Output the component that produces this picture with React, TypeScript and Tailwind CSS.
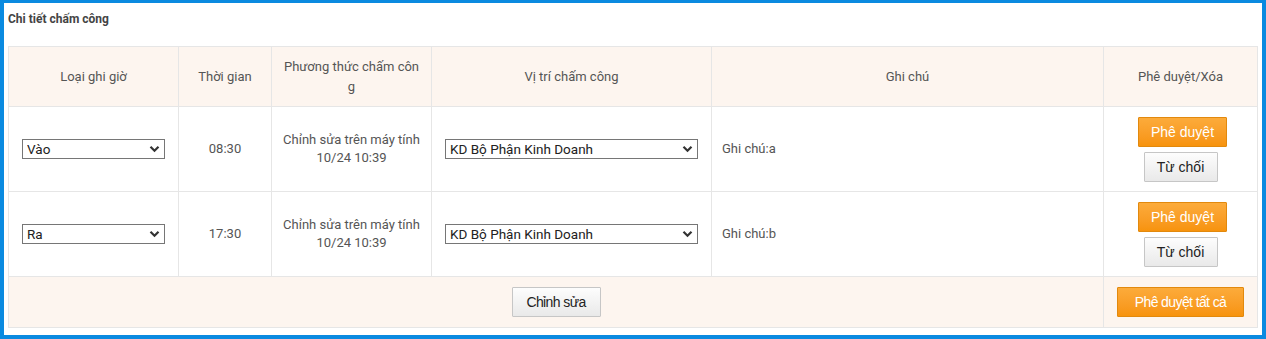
import React from "react";

type Row = {
  kind: string;
  time: string;
  note: string;
};

const rows: Row[] = [
  { kind: "Vào", time: "08:30", note: "Ghi chú:a" },
  { kind: "Ra", time: "17:30", note: "Ghi chú:b" },
];

function Chevron() {
  return (
    <svg
      width="11"
      height="8"
      viewBox="0 0 11 8"
      className="pointer-events-none absolute right-[5px] top-1/2 -translate-y-1/2"
    >
      <path d="M1.5 1.8 L5.5 5.8 L9.5 1.8" fill="none" stroke="#333" strokeWidth="2.2" />
    </svg>
  );
}

function FakeSelect({ value, width }: { value: string; width: string }) {
  return (
    <div className={`relative h-[20px] ${width}`}>
      <select
        defaultValue={value}
        className="h-full w-full appearance-none rounded-none border border-[#767676] bg-white pl-[4px] text-[13.5px] leading-[18px] text-[#222] outline-none"
      >
        <option>{value}</option>
      </select>
      <Chevron />
    </div>
  );
}

const orangeBtn =
  "rounded-[1px] border border-[#e2890d] bg-gradient-to-b from-[#fcab3a] to-[#f7930c] text-white font-['Liberation_Sans',Arial,sans-serif]";
const grayBtn =
  "rounded-[1px] border border-[#c6c6c6] bg-gradient-to-b from-[#fdfdfd] to-[#e9e9e9] text-[#222] font-['Liberation_Sans',Arial,sans-serif]";

export default function App() {
  return (
    <div className="h-[339px] w-[1266px] border-l-4 border-r-4 border-t-[3px] border-b-4 border-[#0a8ae0] bg-white font-['Roboto',Arial,sans-serif] text-[13px] text-[#555]">
      <div className="pl-[4px] pr-[5px]">
        <div className="h-[43px] pt-[7px] text-[12px] font-bold text-[#444]">Chi tiết chấm công</div>

        <table className="w-[1249px] table-fixed border-collapse border border-[#e6e6e6]">
          <colgroup>
            <col className="w-[170px]" />
            <col className="w-[93px]" />
            <col className="w-[160px]" />
            <col className="w-[280px]" />
            <col className="w-[392px]" />
            <col className="w-[154px]" />
          </colgroup>
          <thead>
            <tr className="h-[60px] bg-[#fdf5ef]">
              <th className="border border-[#e6e6e6] font-normal">Loại ghi giờ</th>
              <th className="border border-[#e6e6e6] font-normal">Thời gian</th>
              <th className="border border-[#e6e6e6] px-[10px] font-normal leading-[20px] break-all">
                Phương thức chấm công
              </th>
              <th className="border border-[#e6e6e6] font-normal">Vị trí chấm công</th>
              <th className="border border-[#e6e6e6] font-normal">Ghi chú</th>
              <th className="border border-[#e6e6e6] font-normal">Phê duyệt/Xóa</th>
            </tr>
          </thead>
          <tbody>
            {rows.map((r) => (
              <tr key={r.kind} className="h-[85px]">
                <td className="border border-[#e6e6e6] pl-[13px]">
                  <FakeSelect value={r.kind} width="w-[143px]" />
                </td>
                <td className="border border-[#e6e6e6] text-center">{r.time}</td>
                <td className="border border-[#e6e6e6] text-center leading-[18px]">
                  Chỉnh sửa trên máy tính
                  <br />
                  10/24 10:39
                </td>
                <td className="border border-[#e6e6e6] pl-[13px]">
                  <FakeSelect value="KD Bộ Phận Kinh Doanh" width="w-[253px]" />
                </td>
                <td className="border border-[#e6e6e6] pl-[10px]">{r.note}</td>
                <td className="border border-[#e6e6e6]">
                  <div className="flex flex-col items-center gap-[5px] pt-[1px] pl-[4px]">
                    <button className={`${orangeBtn} h-[30px] w-[89px] text-[14px]`}>Phê duyệt</button>
                    <button className={`${grayBtn} mr-[4px] h-[30px] w-[74px] text-[14px]`}>Từ chối</button>
                  </div>
                </td>
              </tr>
            ))}
            <tr className="h-[51px] bg-[#fdf5ef]">
              <td colSpan={5} className="border border-[#e6e6e6] text-center">
                <button className={`${grayBtn} h-[30px] w-[89px] text-[14px] tracking-[-0.6px]`}>
                  Chỉnh sửa
                </button>
              </td>
              <td className="border border-[#e6e6e6] text-center">
                <button className={`${orangeBtn} h-[30px] w-[127px] text-[14px] tracking-[-0.6px]`}>
                  Phê duyệt tất cả
                </button>
              </td>
            </tr>
          </tbody>
        </table>
      </div>
    </div>
  );
}
